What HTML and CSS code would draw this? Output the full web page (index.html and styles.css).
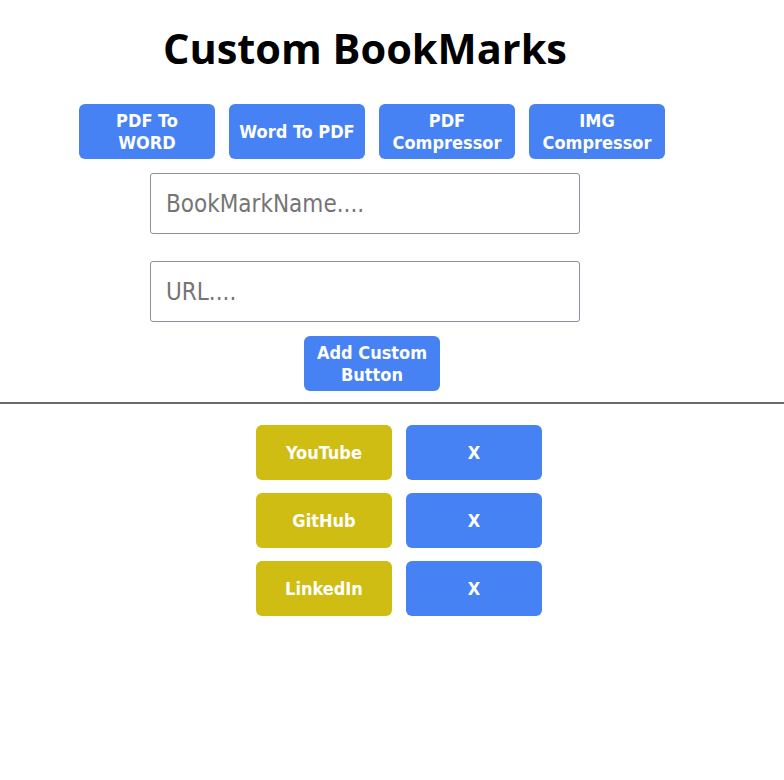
FILE: index.html
```html
<!DOCTYPE html>
<html>
<head>
<meta charset="utf-8">
<link rel="stylesheet" href="styles.css">
</head>
<body>
<header class="top">
  <h1 class="title">Custom BookMarks</h1>
  <div class="tools">
    <button class="btn">PDF To<br>WORD</button>
    <button class="btn">Word To PDF</button>
    <button class="btn">PDF<br>Compressor</button>
    <button class="btn">IMG<br>Compressor</button>
  </div>
  <div class="form">
    <input class="field" type="text" placeholder="BookMarkName....">
    <input class="field field-url" type="text" placeholder="URL....">
    <button class="btn add">Add Custom<br>Button</button>
  </div>
</header>
<hr class="divider">
<main class="list">
  <div class="row"><button class="btn mark">YouTube</button><button class="btn">X</button></div>
  <div class="row"><button class="btn mark">GitHub</button><button class="btn">X</button></div>
  <div class="row"><button class="btn mark">LinkedIn</button><button class="btn">X</button></div>
</main>
</body>
</html>
```
FILE: styles.css
```css
* { box-sizing: border-box; }
body {
  margin: 0;
  background: #fff;
  font-family: "DejaVu Sans Condensed", "DejaVu Sans", Tahoma, sans-serif;
}
.top { width: 784px; }
.title {
  width: 730px;
  margin: 23px 0 0;
  text-align: center;
  font-family: "Open Sans", "Noto Sans", sans-serif;
  font-weight: 700;
  font-size: 41.5px;
  line-height: 50px;
  color: #000;
}
.tools {
  display: flex;
  gap: 14px;
  padding-left: 79px;
  margin-top: 31px;
}
.btn {
  width: 136px;
  height: 55px;
  border: none;
  border-radius: 6px;
  background: #4682f3;
  color: #fff;
  font-family: "DejaVu Sans Condensed", "DejaVu Sans", Tahoma, sans-serif;
  font-weight: 700;
  font-size: 18px;
  line-height: 22px;
  padding: 0;
  text-align: center;
}
.form {
  display: flex;
  flex-direction: column;
  align-items: flex-start;
  padding-left: 150px;
}
.field {
  width: 430px;
  height: 61px;
  margin-top: 14px;
  border: 1px solid #8f8f9d;
  border-radius: 3px;
  padding: 0 15px;
  font-family: "DejaVu Sans Condensed", "DejaVu Sans", Tahoma, sans-serif;
  font-size: 24px;
  color: #333;
}
.field::placeholder { color: #757575; }
.field-url { margin-top: 27px; }
.add {
  margin-top: 14px;
  margin-left: 154px;
}
.divider {
  margin: 11px 0 0;
  border: none;
  border-top: 2px solid #6b6b6b;
  height: 0;
}
.list {
  display: flex;
  flex-direction: column;
  gap: 13px;
  padding-top: 21px;
  padding-left: 256px;
}
.row {
  display: flex;
  gap: 14px;
}
.mark { background: #cfbd13; }
```
